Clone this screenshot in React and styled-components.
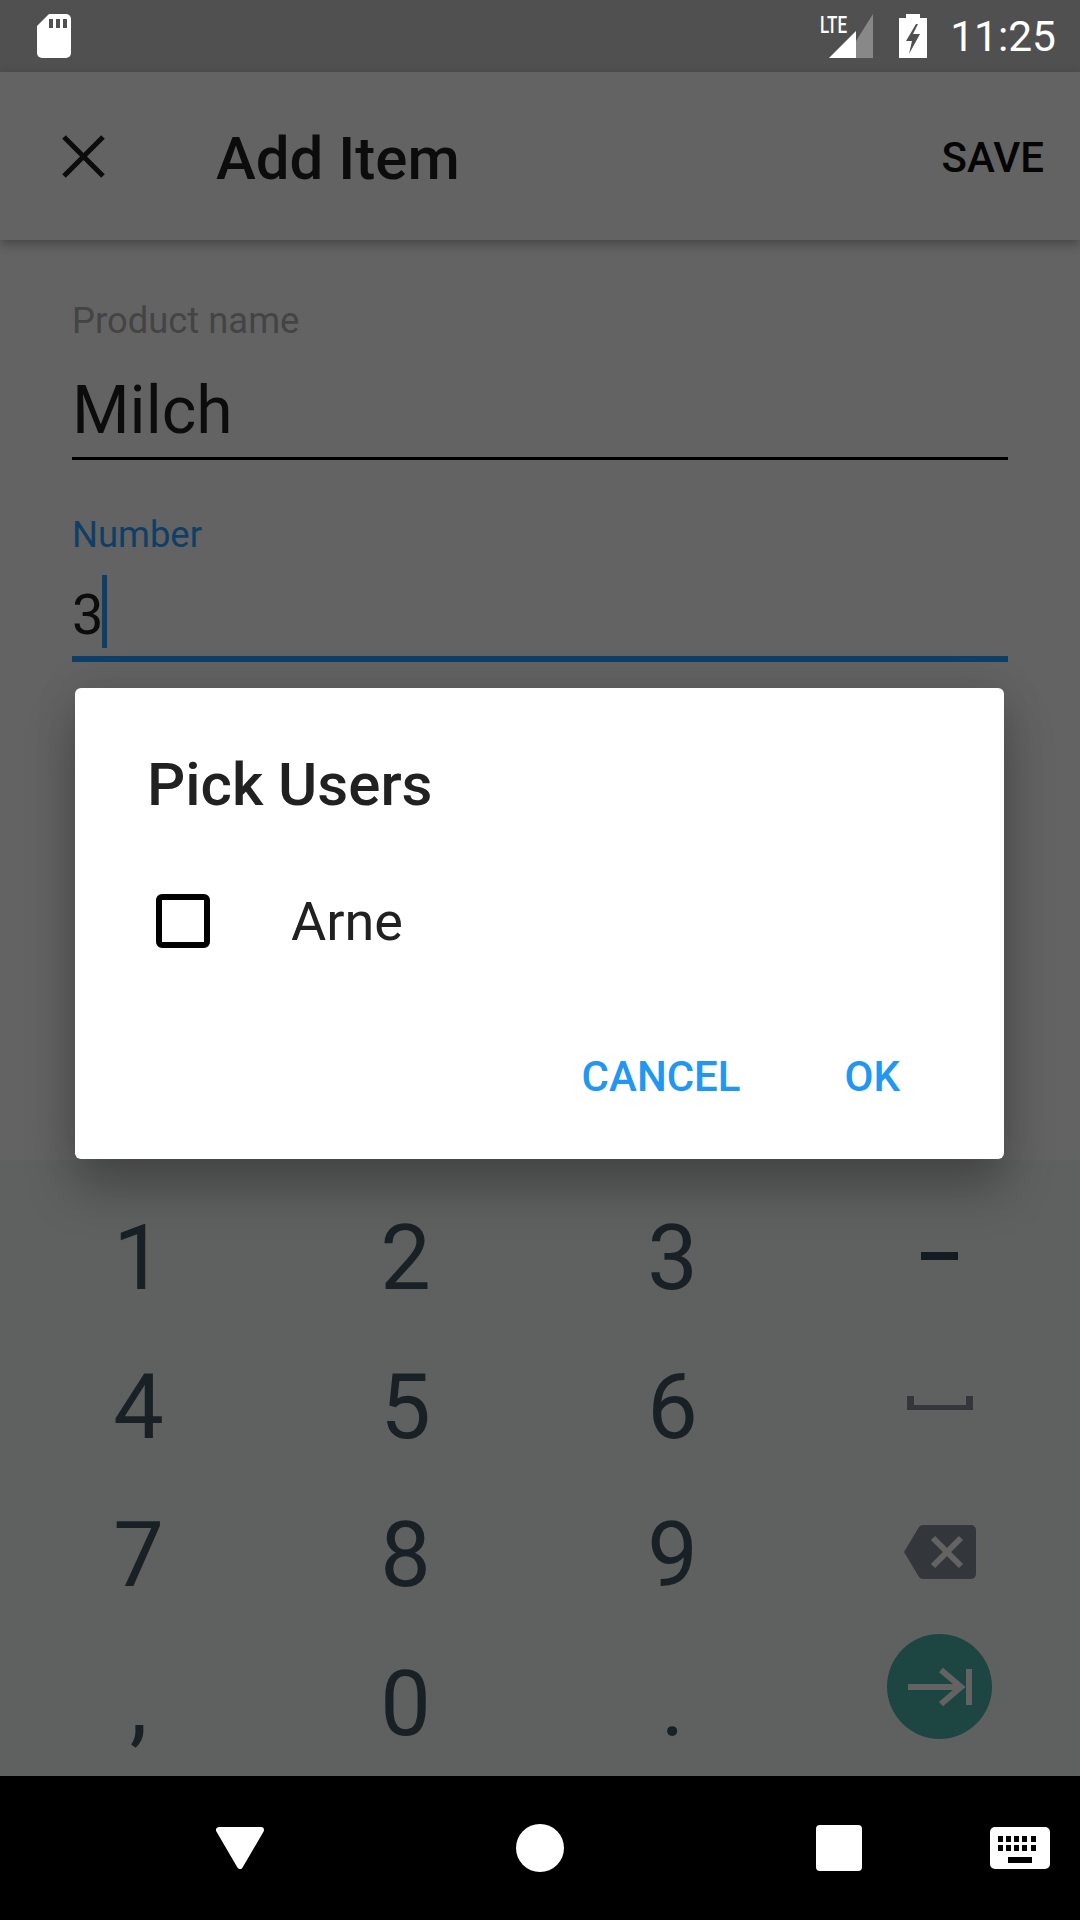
import styled, { createGlobalStyle } from 'styled-components';

const GlobalStyle = createGlobalStyle`
html, body {
    margin: 0;
    padding: 0;
    background: #000;
}
* {
    box-sizing: border-box;
}
`

const Phone = styled.div`
width: 1080px;
height: 1920px;
display: flex;
flex-direction: column;
overflow: hidden;
font-family: Roboto, "Liberation Sans", sans-serif;
`

const StatusBar = styled.div`
height: 72px;
flex-shrink: 0;
background: #505050;
display: flex;
align-items: center;
padding: 0 24px 0 36px;
`

const StatusIcons = styled.div`
margin-left: auto;
display: flex;
align-items: center;
`

const Clock = styled.div`
margin-left: 23px;
font-size: 42.5px;
color: #fff;
`

const Screen = styled.div`
position: relative;
flex: 1;
display: flex;
flex-direction: column;
background: #636363;
`

const AppBar = styled.div`
height: 168px;
flex-shrink: 0;
display: flex;
align-items: center;
padding: 0 36px 0 62px;
background: #636363;
box-shadow: 0 4px 10px rgba(0, 0, 0, 0.3);
`

const Title = styled.div`
margin: 4px 0 0 111px;
font-size: 60px;
font-weight: 500;
color: #0c0c0c;
`

const Save = styled.div`
margin: 2px 0 0 auto;
font-size: 42px;
font-weight: 500;
color: #050505;
`

const Form = styled.div`
padding: 55px 72px 0 72px;
display: flex;
flex-direction: column;
`

const Field = styled.div`
height: ${props => props.$height}px;
padding-top: ${props => props.$top || 0}px;
display: flex;
flex-direction: column;
`

const Label = styled.div`
margin-top: 5px;
font-size: 36.4px;
line-height: 42px;
color: ${props => props.$focused ? '#0f3f66' : '#444'};
`

const InputRow = styled.div`
flex: 1;
display: flex;
align-items: center;
padding-top: ${props => props.$focused ? 11 : 21}px;
border-bottom: ${props => props.$focused ? '6px solid #0f3f66' : '3px solid #000'};
`

const InputText = styled.div`
font-size: ${props => props.$size}px;
margin-top: ${props => props.$nudge || 0}px;
color: #0c0c0c;
`

const Caret = styled.div`
width: 5px;
height: 73px;
margin-left: -1px;
background: #0f3f66;
`

const Keyboard = styled.div`
margin-top: auto;
height: 616px;
padding: 22px 0 0 5px;
background: #5f6160;
display: grid;
grid-template-columns: repeat(4, 267px);
grid-template-rows: repeat(4, 148.5px);
`

const Key = styled.div`
display: flex;
align-items: center;
justify-content: center;
padding-top: ${props => props.$digit ? 5 : 0}px;
font-size: 90px;
color: #192126;
`

const EnterKey = styled.div`
width: 105px;
height: 105px;
margin-bottom: 30px;
border-radius: 50%;
background: #1d4643;
display: flex;
align-items: center;
justify-content: center;
`

const Dialog = styled.div`
position: absolute;
left: 75px;
top: 616px;
width: 929px;
height: 471px;
background: #fff;
border-radius: 6px;
box-shadow: 0 30px 50px rgba(0, 0, 0, 0.26), 0 0 44px rgba(0, 0, 0, 0.1);
padding: 62px 0 0 72px;
display: flex;
flex-direction: column;
`

const DialogTitle = styled.div`
font-size: 60px;
line-height: 70px;
font-weight: 500;
color: #212121;
`

const UserRow = styled.div`
margin-top: 68px;
display: flex;
align-items: center;
`

const CheckBox = styled.div`
width: 54px;
height: 54px;
margin-left: 9px;
border: 6px solid #000;
border-radius: 6px;
`

const UserName = styled.div`
margin: 2px 0 0 81px;
font-size: 54px;
color: #212121;
`

const DialogButtons = styled.div`
margin-top: auto;
padding: 0 104px 58px 0;
display: flex;
justify-content: flex-end;
gap: 104px;
`

const DialogButton = styled.div`
font-size: 42px;
font-weight: 500;
color: #2196f3;
`

const NavBar = styled.div`
height: 144px;
flex-shrink: 0;
background: #000;
display: flex;
align-items: center;
padding: 0 30px 0 216px;
`

const NavGap = styled.div`
width: ${props => props.$width}px;
flex-shrink: 0;
`

const SdIcon = () => (
    <svg width="36" height="44" viewBox="0 0 36 44">
        <path fill="#fff" d="M13 0h17a5 5 0 0 1 5 5v34a5 5 0 0 1-5 5H6a5 5 0 0 1-5-5V12z" />
        <path fill="#505050" d="M13 5h4v9h-4zM20 5h4v9h-4zM27 5h4v9h-4z" />
    </svg>
)

const LteIcon = () => (
    <svg width="54" height="44" viewBox="0 0 54 44" style={{ overflow: 'visible' }}>
        <path fill="#888" d="M36 44V27L53 0v44z" />
        <path fill="#fff" d="M9 44L36 17v27z" />
        <text x="0" y="19" fontFamily="Roboto, sans-serif" fontSize="24" fontWeight="500" fill="#fff" textLength="27" lengthAdjust="spacingAndGlyphs">LTE</text>
    </svg>
)

const BatteryIcon = () => (
    <svg width="28" height="44" viewBox="0 0 28 44" style={{ marginLeft: 25 }}>
        <path fill="#fff" d="M7 0h14v4h7v40H0V4h7z" />
        <path fill="#505050" d="M17 10L7 27h6l-3 13 11-20h-7l5-10z" />
    </svg>
)

const CloseIcon = () => (
    <svg width="43" height="43" viewBox="0 0 43 43">
        <path stroke="#0c0c0c" strokeWidth="5" fill="none" d="M2 2l39 39M41 2L2 41" />
    </svg>
)

const DashIcon = () => (
    <svg width="37" height="8" viewBox="0 0 37 8">
        <rect width="37" height="8" fill="#141c22" />
    </svg>
)

const SpaceIcon = () => (
    <svg width="66" height="14" viewBox="0 0 66 14" style={{ marginTop: -3 }}>
        <path fill="#33373b" d="M0 0h7v9h52V0h7v14H0z" />
    </svg>
)

const BackspaceIcon = () => (
    <svg width="72" height="54" viewBox="0 0 72 54" style={{ marginTop: -3 }}>
        <path fill="#33373b" d="M19 0h48a5 5 0 0 1 5 5v44a5 5 0 0 1-5 5H19a5 5 0 0 1-4-2L0 27 15 2a5 5 0 0 1 4-2z" />
        <path stroke="#636363" strokeWidth="6" fill="none" d="M29 13l28 28M57 13L29 41" />
    </svg>
)

const TabIcon = () => (
    <svg width="64" height="38" viewBox="0 0 64 38">
        <path stroke="#636363" strokeWidth="6" fill="none" d="M0 19h52M33 2l20 17-20 17M61 1v36" />
    </svg>
)

const BackIcon = () => (
    <svg width="48" height="42" viewBox="0 0 48 42">
        <path fill="#fff" stroke="#fff" strokeWidth="6" strokeLinejoin="round" d="M3 3h42L24 39z" />
    </svg>
)

const HomeIcon = () => (
    <svg width="48" height="48" viewBox="0 0 48 48">
        <circle cx="24" cy="24" r="24" fill="#fff" />
    </svg>
)

const RecentsIcon = () => (
    <svg width="46" height="46" viewBox="0 0 46 46">
        <rect width="46" height="46" rx="4" fill="#fff" />
    </svg>
)

const KeyboardIcon = () => (
    <svg width="60" height="42" viewBox="0 0 60 42">
        <rect width="60" height="42" rx="5" fill="#fff" />
        <path fill="#000" d="M8 9h5v6H8zM16 9h5v6h-5zM24 9h5v6h-5zM32 9h5v6h-5zM41 9h5v6h-5zM8 18h5v6H8zM16 18h5v6h-5zM24 18h5v6h-5zM32 18h5v6h-5zM41 18h5v6h-5zM18 30h24v6H18z" />
    </svg>
)

const keys = ['1', '2', '3', 'dash', '4', '5', '6', 'space', '7', '8', '9', 'back', ',', '0', '.', 'enter'];
const iconKeys = { dash: <DashIcon />, space: <SpaceIcon />, back: <BackspaceIcon />, enter: <EnterKey><TabIcon /></EnterKey> };

const App = () => {
    return (
        <Phone>
            <GlobalStyle />
            <StatusBar>
                <SdIcon />
                <StatusIcons>
                    <LteIcon />
                    <BatteryIcon />
                    <Clock>11:25</Clock>
                </StatusIcons>
            </StatusBar>
            <Screen>
                <AppBar>
                    <CloseIcon />
                    <Title>Add Item</Title>
                    <Save>SAVE</Save>
                </AppBar>
                <Form>
                    <Field $height={165}>
                        <Label>Product name</Label>
                        <InputRow><InputText $size={66}>Milch</InputText></InputRow>
                    </Field>
                    <Field $height={202} $top={49}>
                        <Label $focused>Number</Label>
                        <InputRow $focused>
                            <InputText $size={56} $nudge={6}>3</InputText>
                            <Caret />
                        </InputRow>
                    </Field>
                </Form>
                <Keyboard>
                    {keys.map(k => <Key key={k} $digit={!iconKeys[k]}>{iconKeys[k] || k}</Key>)}
                </Keyboard>
                <Dialog>
                    <DialogTitle>Pick Users</DialogTitle>
                    <UserRow>
                        <CheckBox />
                        <UserName>Arne</UserName>
                    </UserRow>
                    <DialogButtons>
                        <DialogButton>CANCEL</DialogButton>
                        <DialogButton>OK</DialogButton>
                    </DialogButtons>
                </Dialog>
            </Screen>
            <NavBar>
                <BackIcon />
                <NavGap $width={252} />
                <HomeIcon />
                <NavGap $width={252} />
                <RecentsIcon />
                <NavGap $width={128} />
                <KeyboardIcon />
            </NavBar>
        </Phone>
    )
}
export default App;
